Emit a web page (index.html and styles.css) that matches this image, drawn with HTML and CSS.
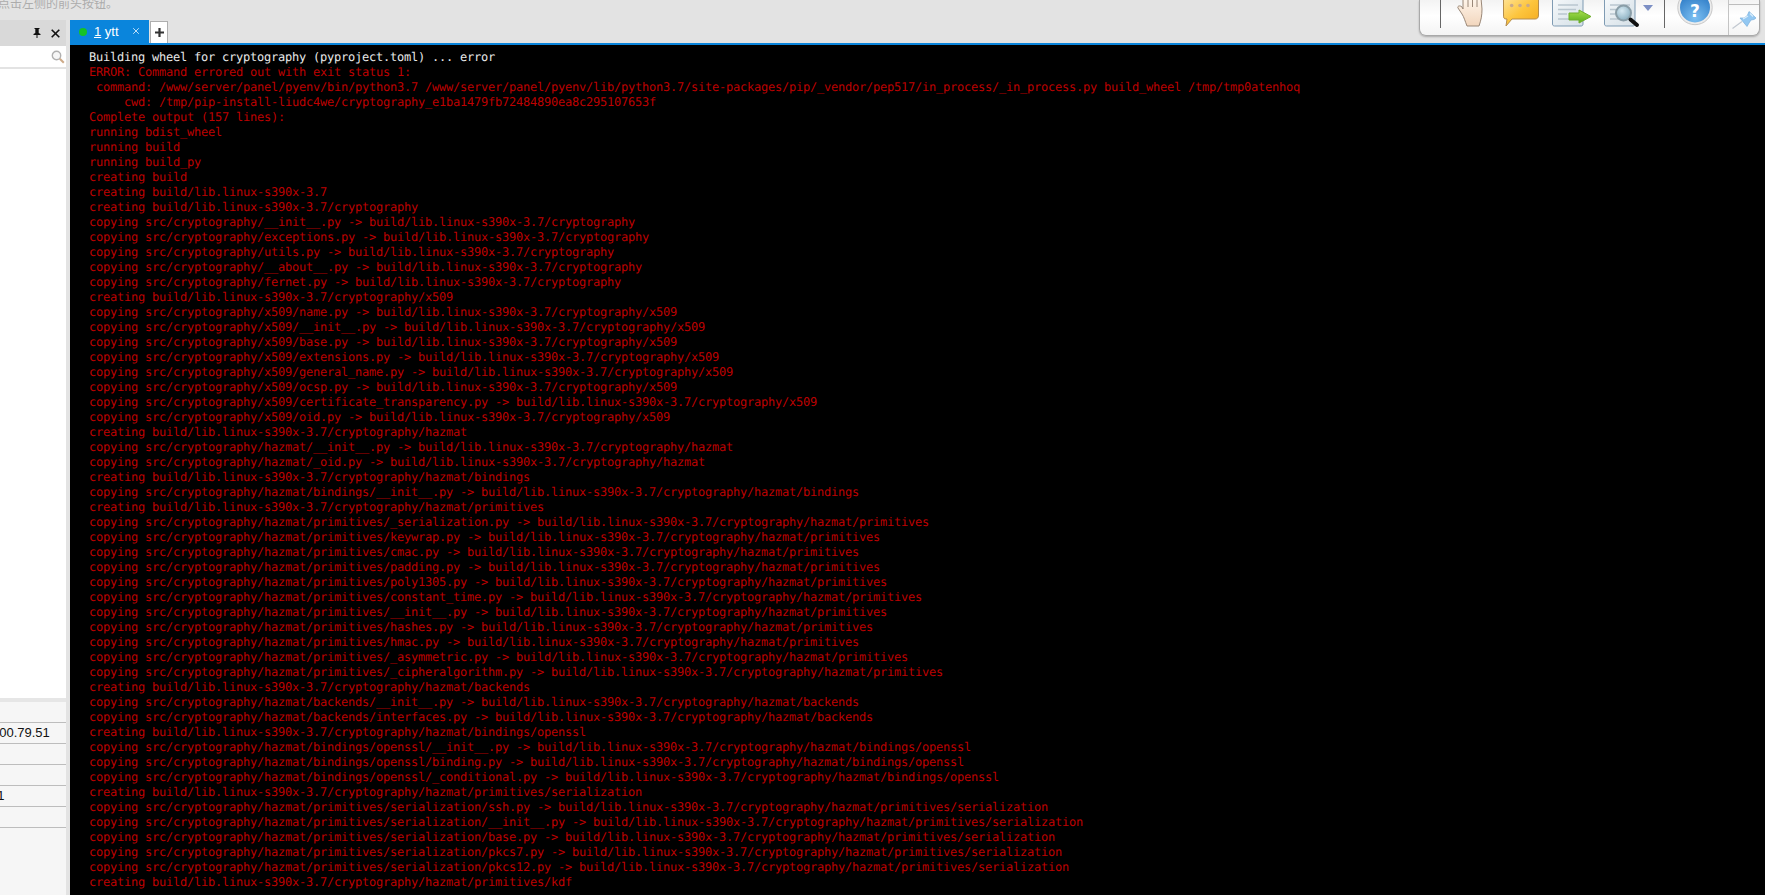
FILE: index.html
```html
<!DOCTYPE html>
<html lang="zh">
<head>
<meta charset="utf-8">
<title>ytt</title>
<link rel="stylesheet" href="styles.css">
</head>
<body>
<header class="notice"><span class="notice-text">点击左侧的前头按钮。</span></header>
<main class="main">
  <aside class="side">
    <div class="side-head">
      <svg class="pin-mini" width="8" height="10" viewBox="0 0 8 10"><path d="M1.500 0H6.500V1H5.700V5L7.500 6V7H4.500V10H3.500V7H.5V6L2.300 5V1H1.500Z" fill="#111"/></svg>
      <svg class="close-mini" width="9" height="9" viewBox="0 0 9 9"><path d="M.7 .7l7.600 7.600M8.300 .7L.7 8.300" stroke="#111" stroke-width="1.600" fill="none"/></svg>
    </div>
    <div class="side-search">
      <svg width="14" height="14" viewBox="0 0 14 14"><circle cx="5.500" cy="5.500" r="4.200" fill="#f6f6f6" stroke="#b0b0b0" stroke-width="1.400"/><path d="M8.800 8.800l4 4" stroke="#cdaa88" stroke-width="2"/></svg>
    </div>
    <div class="side-tree"></div>
    <div class="side-props">
      <div class="prop prop-value"><span class="clip">100.79.51</span></div>
      <div class="prop"></div>
      <div class="prop"></div>
      <div class="prop prop-value"><span class="clip-one">21</span></div>
      <div class="prop"></div>
    </div>
  </aside>
  <section class="work">
    <nav class="tabs">
      <div class="tab">
        <span class="dot"></span>
        <span class="tab-label"><u>1</u> ytt</span>
        <svg class="tab-close" width="8" height="8" viewBox="0 0 8 8"><path d="M1.200 1.200l5.600 5.600M6.800 1.200L1.200 6.800" stroke="#bfe0f8" stroke-width="1" fill="none"/></svg>
      </div>
      <div class="tab-add">
        <svg width="9" height="9" viewBox="0 0 9 9"><path d="M4.500 0v9M0 4.500h9" stroke="#333" stroke-width="2.200" fill="none"/></svg>
      </div>
    </nav>
    <pre class="term"><span class="ok">  Building wheel for cryptography (pyproject.toml) ... error</span>
  ERROR: Command errored out with exit status 1:
   command: /www/server/panel/pyenv/bin/python3.7 /www/server/panel/pyenv/lib/python3.7/site-packages/pip/_vendor/pep517/in_process/_in_process.py build_wheel /tmp/tmp0atenhoq
       cwd: /tmp/pip-install-liudc4we/cryptography_e1ba1479fb72484890ea8c295107653f
  Complete output (157 lines):
  running bdist_wheel
  running build
  running build_py
  creating build
  creating build/lib.linux-s390x-3.7
  creating build/lib.linux-s390x-3.7/cryptography
  copying src/cryptography/__init__.py -> build/lib.linux-s390x-3.7/cryptography
  copying src/cryptography/exceptions.py -> build/lib.linux-s390x-3.7/cryptography
  copying src/cryptography/utils.py -> build/lib.linux-s390x-3.7/cryptography
  copying src/cryptography/__about__.py -> build/lib.linux-s390x-3.7/cryptography
  copying src/cryptography/fernet.py -> build/lib.linux-s390x-3.7/cryptography
  creating build/lib.linux-s390x-3.7/cryptography/x509
  copying src/cryptography/x509/name.py -> build/lib.linux-s390x-3.7/cryptography/x509
  copying src/cryptography/x509/__init__.py -> build/lib.linux-s390x-3.7/cryptography/x509
  copying src/cryptography/x509/base.py -> build/lib.linux-s390x-3.7/cryptography/x509
  copying src/cryptography/x509/extensions.py -> build/lib.linux-s390x-3.7/cryptography/x509
  copying src/cryptography/x509/general_name.py -> build/lib.linux-s390x-3.7/cryptography/x509
  copying src/cryptography/x509/ocsp.py -> build/lib.linux-s390x-3.7/cryptography/x509
  copying src/cryptography/x509/certificate_transparency.py -> build/lib.linux-s390x-3.7/cryptography/x509
  copying src/cryptography/x509/oid.py -> build/lib.linux-s390x-3.7/cryptography/x509
  creating build/lib.linux-s390x-3.7/cryptography/hazmat
  copying src/cryptography/hazmat/__init__.py -> build/lib.linux-s390x-3.7/cryptography/hazmat
  copying src/cryptography/hazmat/_oid.py -> build/lib.linux-s390x-3.7/cryptography/hazmat
  creating build/lib.linux-s390x-3.7/cryptography/hazmat/bindings
  copying src/cryptography/hazmat/bindings/__init__.py -> build/lib.linux-s390x-3.7/cryptography/hazmat/bindings
  creating build/lib.linux-s390x-3.7/cryptography/hazmat/primitives
  copying src/cryptography/hazmat/primitives/_serialization.py -> build/lib.linux-s390x-3.7/cryptography/hazmat/primitives
  copying src/cryptography/hazmat/primitives/keywrap.py -> build/lib.linux-s390x-3.7/cryptography/hazmat/primitives
  copying src/cryptography/hazmat/primitives/cmac.py -> build/lib.linux-s390x-3.7/cryptography/hazmat/primitives
  copying src/cryptography/hazmat/primitives/padding.py -> build/lib.linux-s390x-3.7/cryptography/hazmat/primitives
  copying src/cryptography/hazmat/primitives/poly1305.py -> build/lib.linux-s390x-3.7/cryptography/hazmat/primitives
  copying src/cryptography/hazmat/primitives/constant_time.py -> build/lib.linux-s390x-3.7/cryptography/hazmat/primitives
  copying src/cryptography/hazmat/primitives/__init__.py -> build/lib.linux-s390x-3.7/cryptography/hazmat/primitives
  copying src/cryptography/hazmat/primitives/hashes.py -> build/lib.linux-s390x-3.7/cryptography/hazmat/primitives
  copying src/cryptography/hazmat/primitives/hmac.py -> build/lib.linux-s390x-3.7/cryptography/hazmat/primitives
  copying src/cryptography/hazmat/primitives/_asymmetric.py -> build/lib.linux-s390x-3.7/cryptography/hazmat/primitives
  copying src/cryptography/hazmat/primitives/_cipheralgorithm.py -> build/lib.linux-s390x-3.7/cryptography/hazmat/primitives
  creating build/lib.linux-s390x-3.7/cryptography/hazmat/backends
  copying src/cryptography/hazmat/backends/__init__.py -> build/lib.linux-s390x-3.7/cryptography/hazmat/backends
  copying src/cryptography/hazmat/backends/interfaces.py -> build/lib.linux-s390x-3.7/cryptography/hazmat/backends
  creating build/lib.linux-s390x-3.7/cryptography/hazmat/bindings/openssl
  copying src/cryptography/hazmat/bindings/openssl/__init__.py -> build/lib.linux-s390x-3.7/cryptography/hazmat/bindings/openssl
  copying src/cryptography/hazmat/bindings/openssl/binding.py -> build/lib.linux-s390x-3.7/cryptography/hazmat/bindings/openssl
  copying src/cryptography/hazmat/bindings/openssl/_conditional.py -> build/lib.linux-s390x-3.7/cryptography/hazmat/bindings/openssl
  creating build/lib.linux-s390x-3.7/cryptography/hazmat/primitives/serialization
  copying src/cryptography/hazmat/primitives/serialization/ssh.py -> build/lib.linux-s390x-3.7/cryptography/hazmat/primitives/serialization
  copying src/cryptography/hazmat/primitives/serialization/__init__.py -> build/lib.linux-s390x-3.7/cryptography/hazmat/primitives/serialization
  copying src/cryptography/hazmat/primitives/serialization/base.py -> build/lib.linux-s390x-3.7/cryptography/hazmat/primitives/serialization
  copying src/cryptography/hazmat/primitives/serialization/pkcs7.py -> build/lib.linux-s390x-3.7/cryptography/hazmat/primitives/serialization
  copying src/cryptography/hazmat/primitives/serialization/pkcs12.py -> build/lib.linux-s390x-3.7/cryptography/hazmat/primitives/serialization
  creating build/lib.linux-s390x-3.7/cryptography/hazmat/primitives/kdf</pre>
  </section>
</main>
<div class="toolbar">
  <div class="tools">
    <span class="sep"></span>
    <svg class="tool t-hand" width="26" height="28" viewBox="0 0 26 28">
      <defs><linearGradient id="skin" x1="0" y1="0" x2="0" y2="1"><stop offset="0" stop-color="#fff6ec"/><stop offset="1" stop-color="#f2d6bd"/></linearGradient></defs>
      <path d="M6 -2H24L25 9C25 16 24 20 22 26H10C8 21 7 17 5 14L1 8C0 6 3 5 5 7L6 9Z" fill="url(#skin)" stroke="#9a8878" stroke-width="1"/>
      <path d="M11 -2V7M15.500 -2V7M20 -2V7" stroke="#9a8878" stroke-width="1" fill="none"/>
    </svg>
    <svg class="tool t-chat" width="36" height="28" viewBox="0 0 36 28">
      <defs><linearGradient id="chat" x1="0" y1="0" x2="1" y2="1"><stop offset="0" stop-color="#ffe49a"/><stop offset=".5" stop-color="#fdc53d"/><stop offset="1" stop-color="#f3a91d"/></linearGradient></defs>
      <path d="M3 -3H33C35 -3 35.500 -2 35.500 0V15C35.500 18 34 19 32 19H9L3 26L4 19H3C1 19 .5 18 .5 15V0C.5 -2 1 -3 3 -3Z" fill="url(#chat)" stroke="#b58d4e" stroke-width="1"/>
      <circle cx="8.700" cy="5.500" r="1.800" fill="#c9a98a"/><circle cx="17" cy="5.500" r="1.800" fill="#c9a98a"/><circle cx="25" cy="5.500" r="1.800" fill="#c9a98a"/>
    </svg>
    <svg class="tool t-doc" width="40" height="28" viewBox="0 0 40 28">
      <defs><linearGradient id="paper" x1="0" y1="0" x2="1" y2="1"><stop offset="0" stop-color="#f7fafc"/><stop offset="1" stop-color="#d4dfe6"/></linearGradient><linearGradient id="green" x1="0" y1="0" x2="0" y2="1"><stop offset="0" stop-color="#a9e04f"/><stop offset="1" stop-color="#5aae1c"/></linearGradient></defs>
      <path d="M.5 -4H31V24C31 25.500 30 26 29 26H2.500C1.500 26 .5 25.500 .5 24Z" fill="url(#paper)" stroke="#7f9bb3" stroke-width="1"/>
      <path d="M6 5H26M6 9.500H24M6 14H15M6 19H24" stroke="#b9c6cf" stroke-width="1.600" fill="none"/>
      <path d="M17 13H27V10L39 16.500L27 23V20H17Z" fill="url(#green)" stroke="#6fae2c" stroke-width="1"/>
    </svg>
    <svg class="tool t-find" width="50" height="28" viewBox="0 0 50 28">
      <defs><radialGradient id="lens" cx=".4" cy=".35" r=".7"><stop offset="0" stop-color="#d6e9f2"/><stop offset="1" stop-color="#87adbf"/></radialGradient></defs>
      <path d="M.5 -4H31V24C31 25.500 30 26 29 26H2.500C1.500 26 .5 25.500 .5 24Z" fill="url(#paper)" stroke="#7f9bb3" stroke-width="1"/>
      <path d="M6 5H26M6 9.500H12M6 14H12M6 19H22" stroke="#b9c6cf" stroke-width="1.600" fill="none"/>
      <circle cx="19.500" cy="13" r="7.500" fill="url(#lens)" stroke="#8a9ea8" stroke-width="2"/>
      <path d="M26.500 19.500L33 25" stroke="#111" stroke-width="4" stroke-linecap="round"/>
      <path d="M39 5H49L44 11Z" fill="#7c8fc4"/>
    </svg>
    <span class="sep sep-help"></span>
    <svg class="tool t-help" width="38" height="28" viewBox="0 0 38 28">
      <defs><radialGradient id="help" cx=".5" cy=".85" r=".85"><stop offset="0" stop-color="#7cc0f2"/><stop offset="1" stop-color="#2a78c4"/></radialGradient></defs>
      <circle cx="19" cy="7.500" r="17.200" fill="#ececec" stroke="#c8c8c8" stroke-width="1"/>
      <circle cx="19" cy="7.500" r="15" fill="url(#help)"/>
      <text class="q" x="19" y="17" text-anchor="middle">?</text>
    </svg>
  </div>
  <div class="pin-col">
    <span class="pin-top"></span>
    <svg width="25" height="19" viewBox="0 0 25 19">
      <path d="M.5 17.500L10 10.500" stroke="#c2c8d0" stroke-width="1.200"/>
      <path d="M8 7L15 15.500L17 12L19 9L22 8.500L24 7L17 .5L16 3L15 5L12 7Z" fill="#93c8f2" stroke="#7bb0dc" stroke-width=".7"/>
      <path d="M11 8L16 5M18 2.500L21 5.500" stroke="#d8ecfb" stroke-width="1.300"/>
    </svg>
  </div>
</div>
</body>
</html>
```

FILE: styles.css
```css
* { box-sizing: border-box; }

html, body {
  margin: 0;
  height: 100%;
  overflow: hidden;
}

body {
  display: flex;
  flex-direction: column;
  background: #e3e3e3;
  font-family: "Liberation Sans", "Noto Sans CJK SC", sans-serif;
}

.notice {
  height: 20px;
  flex: none;
  overflow: hidden;
  position: relative;
}

.notice-text {
  display: block;
  margin-top: -6px;
  margin-left: -2px;
  font-family: "Noto Sans CJK SC", sans-serif;
  font-size: 12px;
  line-height: 18px;
  color: #acacac;
}

.main {
  flex: 1;
  display: flex;
  min-height: 0;
}

.side {
  width: 66px;
  margin-right: 4px;
  flex: none;
  display: flex;
  flex-direction: column;
  background: #fff;
}

.side-head {
  height: 26px;
  flex: none;
  background: #d9d9d9;
  display: flex;
  align-items: center;
  justify-content: flex-end;
  gap: 10px;
  padding: 0 6px 0 0;
}

.side-search {
  height: 22px;
  flex: none;
  margin-top: 1px;
  display: flex;
  align-items: center;
  justify-content: flex-end;
  padding-right: 1px;
  border-bottom: 2px solid #e3e3e3;
}

.side-tree {
  flex: 1;
}

.side-props {
  height: 197px;
  flex: none;
  background: #f6f6f6;
  border-top: 4px solid #e6e6e6;
  padding-top: 20px;
}

.prop {
  height: 21px;
  border-top: 1px solid #bdbdbd;
  overflow: hidden;
  font-size: 13px;
  line-height: 20px;
  color: #111;
  position: relative;
}

.prop:last-child {
  height: 22px;
  border-bottom: 1px solid #bdbdbd;
}

.clip { margin-left: -8px; }
.clip-one { margin-left: -10px; }

.work {
  flex: 1;
  min-width: 0;
  display: flex;
  flex-direction: column;
}

.tabs {
  height: 23px;
  flex: none;
  display: flex;
  gap: 1px;
}

.tab {
  width: 79px;
  display: flex;
  align-items: center;
  background: #0a85dc;
  color: #fff;
  padding-left: 9px;
  position: relative;
}

.dot {
  width: 8px;
  height: 8px;
  border-radius: 50%;
  background: #16c226;
  flex: none;
}

.tab-label {
  margin-left: 7px;
  font-size: 13px;
  line-height: 18px;
  margin-top: 1px;
}

.tab-close {
  position: absolute;
  top: 7px;
  left: 62px;
}

.tab-add {
  width: 18px;
  margin-top: 1px;
  display: flex;
  align-items: center;
  justify-content: center;
  background: #fff;
  border: 1px solid #aeaeae;
  border-bottom: 0;
}

.term {
  flex: 1;
  min-height: 0;
  margin: 0;
  overflow: hidden;
  padding: 5px 0 0 5px;
  background: #000;
  border-top: 2px solid #0a85dc;
  color: #bd0000;
  font-family: "DejaVu Sans Mono", monospace;
  font-size: 12px;
  letter-spacing: -0.224px;
  line-height: 15px;
  text-rendering: geometricPrecision;
}

.ok { color: #e8e8e8; }

.toolbar {
  position: absolute;
  top: 0;
  left: 1419px;
  width: 341px;
  height: 36px;
  display: flex;
  background: linear-gradient(#f3f3f3, #ffffff 45%, #f4f4f4);
  border: 1px solid #a9a9a9;
  border-top: 0;
  border-radius: 0 0 7px 7px;
  box-shadow: 0 1px 2px rgba(0, 0, 0, .25);
}

.tools {
  width: 308px;
  display: flex;
  align-items: flex-start;
  padding-left: 20px;
  overflow: hidden;
}

.sep {
  width: 1px;
  height: 28px;
  background: #666;
  flex: none;
}

.tool {
  flex: none;
  overflow: hidden;
}

.t-hand { margin-left: 16px; }
.t-chat { margin-left: 20px; }
.t-doc { margin-left: 13px; }
.t-find { margin-left: 12px; }
.sep-help { margin-left: 10px; }
.t-help { margin-left: 11px; }

.q {
  font-family: "DejaVu Sans", sans-serif;
  font-size: 17px;
  font-weight: 700;
  fill: #fff;
}

.pin-col {
  flex: 1;
  border-left: 1px solid #c4c4c4;
  display: flex;
  flex-direction: column;
  align-items: center;
}

.pin-top {
  width: 100%;
  height: 5px;
  border-bottom: 1px solid #bdbdbd;
  margin-bottom: 6px;
}
```
